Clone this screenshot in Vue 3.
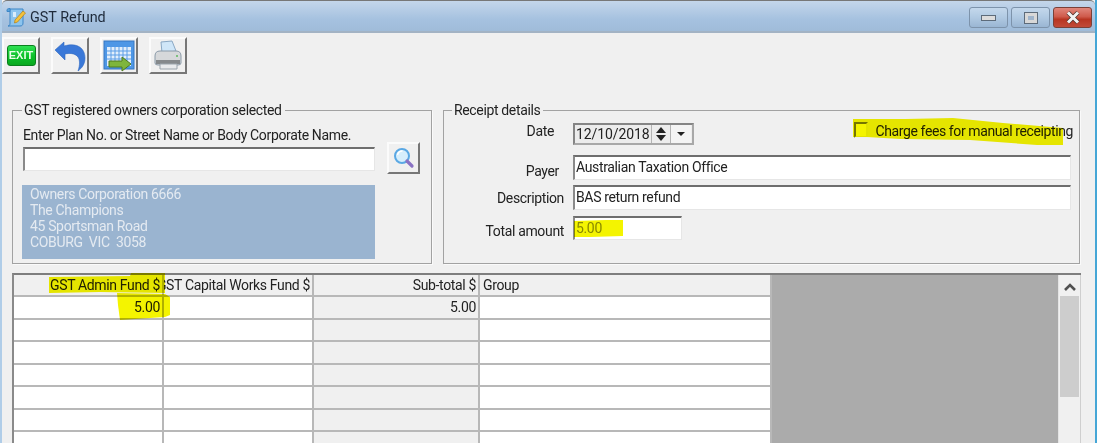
<script setup>
const columns = [
  { label: 'GST Admin Fund $', align: 'right' },
  { label: 'GST Capital Works Fund $', align: 'right' },
  { label: 'Sub-total $', align: 'right' },
  { label: 'Group', align: 'left' }
]
const rows = [
  ['5.00', '', '5.00', ''],
  ['', '', '', ''],
  ['', '', '', ''],
  ['', '', '', ''],
  ['', '', '', ''],
  ['', '', '', ''],
  ['', '', '', '']
]
const address = ['Owners Corporation 6666', 'The Champions', '45 Sportsman Road', 'COBURG  VIC  3058']
</script>

<template>
  <div class="page">
    <div class="window">
      <header class="titlebar">
        <svg class="app-icon" width="22" height="22" viewBox="0 0 22 22">
          <path d="M5 2h13v14c0 2-1 3-3 3H3c2 0 2-2 2-3z" fill="#8cc4ee" stroke="#3d86c6" />
          <path d="M2 3c0-1 1-1.500 3-1.500v3H2z" fill="#5aa3dc" stroke="#3d86c6" />
          <path d="M8 5h3v5H8z" fill="#d9ecfa" />
          <path d="M10 13l8-9 2.500 2-8 9-3 1z" fill="#f4c23c" stroke="#b57f12" stroke-width=".7" />
        </svg>
        <span class="title">GST Refund</span>
        <div class="caption">
          <button class="cap cap-min"><i class="min-glyph"></i></button>
          <button class="cap cap-max"><i class="max-glyph"></i></button>
          <button class="cap cap-close">
            <svg width="16" height="13" viewBox="0 0 16 13">
              <path d="M3 1.500l10 10M13 1.500l-10 10" stroke="#50342e" stroke-width="4.400" />
              <path d="M3 1.500l10 10M13 1.500l-10 10" stroke="#f2f2f2" stroke-width="3" />
            </svg>
          </button>
        </div>
      </header>

      <div class="toolbar">
        <button class="tool">
          <span class="exit">EXIT</span>
        </button>
        <button class="tool">
          <svg width="32" height="32" viewBox="0 0 32 32">
            <path d="M1 10L10 2v4c14-4 21 3 21 12 0 6-3 10-7 13 2-6 2-11 0-14-3-4-9-4-13-3v6z" fill="#3a78d8" stroke="#2f68c0" stroke-width=".6" />
          </svg>
        </button>
        <button class="tool">
          <svg width="32" height="32" viewBox="0 0 32 32">
            <rect x="1" y="1" width="30" height="28" fill="#4e97e6" stroke="#3676c0" />
            <path d="M4 7h24v19H4z" fill="#e2eefb" />
            <path d="M4 11h24M4 15h24M4 19h24M8 7v19M12 7v19M16 7v19M20 7v19M24 7v19" stroke="#5a9de6" stroke-width="1" />
            <path d="M6 21h13v-4l9 7-9 7v-4H6z" fill="#7eb53c" stroke="#4f7a1e" />
          </svg>
        </button>
        <button class="tool">
          <svg width="32" height="32" viewBox="0 0 32 32">
            <path d="M9 2l11-1 4 10-14 2z" fill="#cfe6f8" stroke="#8aa8c4" />
            <path d="M3 16q0-5 5-5h16q5 0 5 5v7q0 2-3 2H6q-3 0-3-2z" fill="#d6d8da" stroke="#8a9aa8" />
            <path d="M4 20h24v4H4z" fill="#85898c" />
            <path d="M8 24h17v5H8z" fill="#e8eaec" stroke="#9aa4ac" />
            <circle cx="25" cy="16" r="1" fill="#5cb85c" />
          </svg>
        </button>
      </div>

      <div class="panels">
        <fieldset class="group group-owner">
          <legend>GST registered owners corporation selected</legend>
          <div class="prompt">Enter Plan No. or Street Name or Body Corporate Name.</div>
          <div class="search-row">
            <div class="field search-input"></div>
            <button class="tool search-btn">
              <svg width="22" height="22" viewBox="0 0 22 22">
                <circle cx="9" cy="9" r="7" fill="#d6eefc" stroke="#5aa8e4" stroke-width="2" />
                <path d="M4.500 8a5 5 0 0 1 5-4" stroke="#fff" stroke-width="1.500" fill="none" />
                <path d="M14 14l5 5" stroke="#8a72c4" stroke-width="3.200" stroke-linecap="round" />
              </svg>
            </button>
          </div>
          <div class="address">
            <div v-for="line in address" :key="line" class="address-line">{{ line }}</div>
          </div>
        </fieldset>

        <fieldset class="group group-receipt">
          <legend>Receipt details</legend>
          <div class="form">
            <label class="lbl lbl-date">Date</label>
            <div class="date-row">
              <div class="date-box">
                <div class="field date-text">12/10/2018</div>
                <div class="spin">
                  <span class="up"></span>
                  <span class="down"></span>
                </div>
                <div class="drop"><span class="down"></span></div>
              </div>
              <div class="check-wrap">
                <span class="check"></span>
                <span class="check-label">Charge fees for manual receipting</span>
              </div>
            </div>
            <label class="lbl lbl-payer">Payer</label>
            <div class="field wide">Australian Taxation Office</div>
            <label class="lbl lbl-desc">Description</label>
            <div class="field wide">BAS return refund</div>
            <label class="lbl lbl-total">Total amount</label>
            <div class="field amount">5.00</div>
          </div>
        </fieldset>
      </div>

      <div class="gridbox">
        <div class="table">
          <div
            v-for="col in columns"
            :key="col.label"
            class="cell head"
            :class="col.align"
          ><span>{{ col.label }}</span></div>
          <template v-for="(row, r) in rows" :key="r">
            <div
              v-for="(val, c) in row"
              :key="c"
              class="cell"
              :class="[columns[c].align, c === 2 ? 'locked' : '']"
            ><span>{{ val }}</span></div>
          </template>
        </div>
        <div class="blank"></div>
        <div class="scrollbar">
          <svg class="scroll-up" width="14" height="10" viewBox="0 0 14 10">
            <path d="M2 8l5-5 5 5" fill="none" stroke="#505050" stroke-width="2.600" />
          </svg>
          <div class="thumb"></div>
        </div>
      </div>
    </div>

    <svg class="marker" width="1099" height="443" viewBox="0 0 1099 443">
      <path d="M853 119 L905 119 L953 118 L1003 123 L1063 128 L1063 145 L1037 145 L970 140 L900 139 L867 137 L853 137 Z" />
      <path d="M574 221 L606 220 L623 220 L623 236 L590 237 L574 237 Z" />
      <path d="M49 277 L130 276 L131 273 L165 273 L165 293 L100 292 L49 293 Z" />
      <path d="M117 293 L165 294 L170 297 L170 315 L165 317 L135 319 L120 320 L118 305 Z" />
    </svg>
  </div>
</template>

<style>
html, body { margin: 0; background: #fff; }
</style>

<style scoped>
.page {
  position: relative;
  width: 1099px;
  height: 443px;
  overflow: hidden;
  background: #fff;
  font-family: Roboto, "Liberation Sans", Arial, sans-serif;
  font-size: 14px;
  letter-spacing: -0.35px;
  color: #222;
}
.window {
  width: 1097px;
  height: 443px;
  box-sizing: border-box;
  background: #f0f0f0;
  border-left: 2px solid #b0cde8;
  border-right: 2px solid #45a6d6;
  filter: blur(0.35px);
}
.titlebar {
  display: flex;
  align-items: center;
  height: 33px;
  box-sizing: border-box;
  padding: 3px 0 0 3px;
  border-top: 1px solid #777;
  border-bottom: 2px solid #a3b3c4;
  border-radius: 5px 5px 0 0;
  background: linear-gradient(180deg, #c4d6ea 0%, #a6c2e0 60%, #a0bcd9 100%);
}
.app-icon { margin-right: 3px; }
.title { font-size: 14.4px; letter-spacing: 0; color: #1e2a3a; }
.caption { display: flex; margin-left: auto; margin-right: 3px; gap: 3px; }
.cap {
  display: flex;
  align-items: center;
  justify-content: center;
  width: 39px;
  height: 21px;
  padding: 0;
  border: 1px solid #7d93ab;
  border-radius: 3px;
  background: linear-gradient(180deg, #c4d8ec 0%, #b0c9e2 50%, #9ab6d3 100%);
}
.cap-close {
  border-color: #7a4038;
  background: linear-gradient(180deg, #e0877c 0%, #cf5b4c 45%, #b83522 60%, #c14a38 100%);
}
.min-glyph {
  display: block;
  width: 13px;
  height: 4px;
  background: #dcdcdc;
  border: 1px solid #5d6b7a;
}
.max-glyph {
  display: block;
  width: 6px;
  height: 4px;
  background: #9fb4cb;
  border: 3px solid #d8d8d8;
  outline: 1px solid #5d6b7a;
}
.toolbar {
  display: flex;
  gap: 11px;
  padding: 4px 0 0 0;
}
.tool {
  display: flex;
  align-items: center;
  justify-content: center;
  width: 38px;
  height: 37px;
  padding: 0;
  box-sizing: border-box;
  background: #f0f0f0;
  border: 2px solid;
  border-color: #fbfbfb #777 #777 #fbfbfb;
}
.exit {
  display: block;
  width: 29px;
  height: 21px;
  box-sizing: border-box;
  border-radius: 3px;
  background: linear-gradient(180deg, #2fe052, #0cc02a 55%, #09a81f);
  border: 1px solid #0a7f1e;
  color: #e9ffe9;
  font-family: "Liberation Sans", Arial, sans-serif;
  font-size: 11px;
  font-weight: 700;
  letter-spacing: 0;
  line-height: 19px;
  text-align: center;
}
.panels {
  display: flex;
  gap: 11px;
  margin: 28px 0 0 10px;
}
.group {
  box-sizing: border-box;
  margin: 0;
  height: 162px;
  border: 1px solid #a2a2a2;
  box-shadow: 1px 1px 0 #fafafa;
  min-width: 0;
}
.group legend {
  padding: 0 3px 0 2px;
  margin-left: 8px;
  line-height: 16px;
}
.group-owner { width: 420px; padding: 0 0 0 10px; }
.group-owner legend { margin-left: -1px; }
.group-receipt { width: 637px; padding: 0; }
.prompt { margin-top: 8px; height: 18px; line-height: 18px; }
.search-row { display: flex; align-items: flex-start; margin-top: -2px; }
.search-input { width: 352px; height: 24px; margin-top: 5px; }
.search-btn { width: 33px; height: 32px; margin-left: 12px; }
.field {
  box-sizing: border-box;
  background: #fff;
  border-top: 2px solid #6e6e6e;
  border-left: 2px solid #8a8a8a;
  border-right: 1px solid #e6e6e6;
  border-bottom: 1px solid #e6e6e6;
  padding-left: 1px;
  line-height: 21px;
  white-space: nowrap;
}
.address {
  width: 353px;
  height: 74px;
  margin: 11px 0 0 -1px;
  padding-top: 1px;
  box-sizing: border-box;
  background: #9ab4d0;
  color: #e4eaf1;
}
.address-line { padding-left: 8px; height: 16px; line-height: 16px; white-space: pre; }
.form {
  display: grid;
  grid-template-columns: 120px 1fr;
  margin: 5px 0 0 9px;
}
.lbl {
  justify-self: end;
  align-self: start;
  margin-right: 9px;
  line-height: 16px;
}
.lbl-date { margin-top: 0; margin-right: 19px; }
.lbl-payer { margin-top: 8px; margin-right: 14px; }
.lbl-desc { margin-top: 5px; }
.lbl-total { margin-top: 8px; }
.date-row {
  display: flex;
  justify-content: space-between;
  height: 22px;
  margin-bottom: 10px;
}
.date-box {
  display: flex;
  width: 121px;
  height: 22px;
  box-sizing: border-box;
  background: #ececec;
  border: 2px solid #a8a8a8;
  border-left-color: #858585;
  border-top-color: #858585;
}
.date-text {
  border: 0;
  background: transparent;
  width: 76px;
  letter-spacing: -0.1px;
  line-height: 19px;
}
.spin, .drop {
  display: flex;
  flex-direction: column;
  align-items: center;
  justify-content: center;
  gap: 2px;
  background: #ededed;
  width: 18px;
  border-left: 1px solid #b4b4b4;
}
.drop { width: 20px; background: #f4f4f4; }
.up, .down { display: block; width: 0; height: 0; border-left: 5px solid transparent; border-right: 5px solid transparent; }
.up { border-bottom: 6px solid #222; }
.down { border-top: 6px solid #222; }
.drop .down { border-top-width: 4px; border-left-width: 4px; border-right-width: 4px; }
.check-wrap {
  display: flex;
  align-items: flex-start;
  gap: 8px;
  margin-right: 6px;
}
.check {
  width: 14px;
  height: 16px;
  margin-top: -1px;
  box-sizing: border-box;
  border: 2px solid #7a7a7a;
  border-right-color: #eee;
  border-bottom-color: #eee;
  background: #fff;
}
.check-label { line-height: 16px; letter-spacing: -0.4px; }
.wide { width: 498px; height: 25px; margin-bottom: 5px; }
.amount { width: 109px; height: 24px; margin-top: 1px; color: #8f8f6a; }
.gridbox {
  display: flex;
  margin: 9px 0 0 10px;
  width: 1069px;
  height: 170px;
  border-top: 2px solid #7e7e7e;
  border-left: 2px solid #8a8a8a;
  box-sizing: border-box;
}
.table {
  display: grid;
  grid-template-columns: 150px 150px 166px 292px;
  grid-template-rows: 22px repeat(7, 22.5px);
  width: 758px;
  flex: none;
  background: #fff;
}
.cell {
  display: flex;
  align-items: center;
  min-width: 0;
  overflow: hidden;
  box-sizing: border-box;
  padding: 0 2px 0 3px;
  white-space: nowrap;
  border-right: 2px solid #b8b8b8;
  border-bottom: 2px solid #b8b8b8;
}
.cell.right { justify-content: flex-end; }
.cell.left { justify-content: flex-start; }
.head { background: #f0f0f0; }
.locked { background: #f0f0f0; }
.blank { flex: 1; background: #ababab; }
.scrollbar {
  display: flex;
  flex-direction: column;
  align-items: center;
  width: 23px;
  flex: none;
  background: #f0f0f0;
  border-left: 1px solid #e4e4e4;
  border-right: 1px solid #cfcfcf;
  box-sizing: border-box;
}
.scroll-up { margin-top: 7px; }
.thumb { width: 19px; height: 101px; margin-top: 4px; background: #cdcdcd; }
.marker {
  position: absolute;
  left: 0;
  top: 0;
  mix-blend-mode: multiply;
  pointer-events: none;
}
.marker path { fill: #f4f400; }
</style>
